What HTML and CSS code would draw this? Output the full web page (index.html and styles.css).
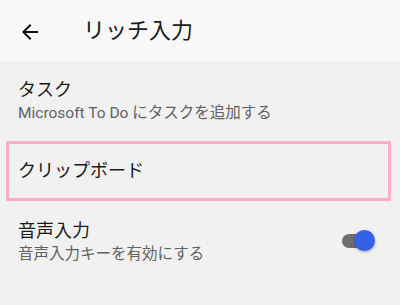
FILE: index.html
```html
<!DOCTYPE html>
<html lang="ja">
<head>
<meta charset="utf-8">
<link rel="stylesheet" href="styles.css">
</head>
<body>
<header class="appbar">
  <span class="back">
    <svg width="24" height="24" viewBox="0 0 24 24"><path d="M20 11H7.83l5.59-5.59L12 4l-8 8 8 8 1.41-1.41L7.83 13H20v-2z" fill="#111"/></svg>
  </span>
  <h1 class="title">リッチ入力</h1>
</header>
<main class="list">
  <div class="item item-task">
    <div class="item-title">タスク</div>
    <div class="item-sub">Microsoft To Do にタスクを追加する</div>
  </div>
  <div class="item item-clip">
    <div class="item-title">クリップボード</div>
  </div>
  <div class="item item-voice">
    <div class="texts">
      <div class="item-title">音声入力</div>
      <div class="item-sub">音声入力キーを有効にする</div>
    </div>
    <span class="switch"><span class="track"></span><span class="thumb"></span></span>
  </div>
</main>
</body>
</html>
```
FILE: styles.css
```css
html, body {
  margin: 0;
  padding: 0;
}
body {
  width: 400px;
  height: 305px;
  background: #f1f1f1;
  font-family: Roboto, "Noto Sans CJK JP", sans-serif;
  overflow: hidden;
}
.appbar {
  height: 61px;
  background: #f8f8f8;
  display: flex;
  align-items: center;
  box-sizing: border-box;
  padding-left: 18px;
}
.back {
  width: 24px;
  height: 24px;
  display: flex;
  margin-top: 2px;
}
.title {
  margin: 0 0 0 41px;
  font-size: 22px;
  font-weight: 400;
  color: #1a1a1a;
  line-height: 30px;
}
.list {
  display: flex;
  flex-direction: column;
}
.item {
  padding: 0 18px;
}
.item-title {
  font-size: 18px;
  line-height: 24px;
  color: #1a1a1a;
}
.item-sub {
  font-size: 15.5px;
  line-height: 22px;
  color: #626262;
}
.item-task {
  padding-top: 17px;
  height: 63px;
}
.item-clip {
  margin: 0 9px 0 6px;
  height: 60px;
  box-sizing: border-box;
  border: 3px solid #ffabc9;
  padding: 0 0 0 9px;
  display: flex;
  align-items: center;
}
.item-voice {
  padding-top: 18px;
  display: flex;
  align-items: center;
  justify-content: space-between;
}
.switch {
  position: relative;
  width: 33px;
  height: 21px;
  margin-right: 7px;
  margin-top: -4px;
}
.track {
  position: absolute;
  left: 0;
  top: 4px;
  width: 28px;
  height: 14px;
  border-radius: 7px;
  background: #707070;
}
.thumb {
  position: absolute;
  left: 12px;
  top: 0;
  width: 21px;
  height: 21px;
  border-radius: 50%;
  background: #3461e8;
  box-shadow: 0 1px 3px rgba(0,0,0,0.35);
}
```
